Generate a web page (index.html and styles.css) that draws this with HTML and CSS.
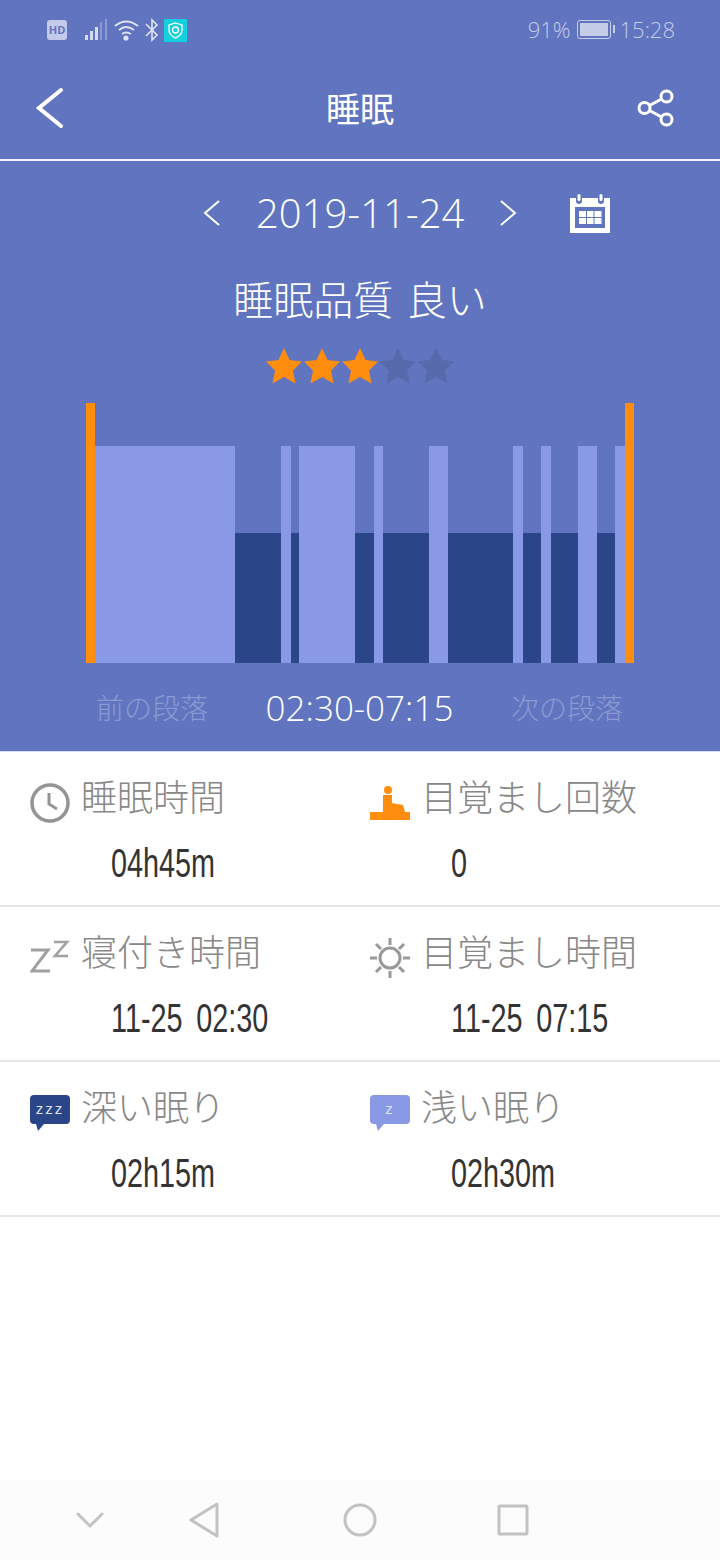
FILE: index.html
```html
<!DOCTYPE html>
<html lang="ja">

<head>
    <meta charset="UTF-8">
    <meta name="viewport" content="width=device-width, initial-scale=1.0">
    <title>睡眠</title>

    <link rel="stylesheet" href="styles.css">
</head>

<body>

    <div class="page">
        <header class="hero">
            <div class="status">
                <div class="status__left">
                    <span class="status__hd">HD</span>
                    <svg class="status__signal" width="23" height="22" viewBox="0 0 23 22">
                        <rect x="0" y="16" width="3" height="5" fill="#d5daef" />
                        <rect x="5" y="12" width="3" height="9" fill="#d5daef" />
                        <rect x="10" y="8" width="3" height="13" fill="#d5daef" />
                        <rect x="15" y="3" width="2" height="18" fill="#8b9ad2" />
                        <rect x="20" y="0" width="2" height="21" fill="#8b9ad2" />
                    </svg>
                    <svg class="status__wifi" width="26" height="22" viewBox="0 0 26 22" fill="none" stroke="#dfe3f3" stroke-width="2">
                        <path d="M1 7 Q12 -2 24 7" />
                        <path d="M5 11 Q12 5 20 11" />
                        <path d="M8 15 Q12 12 17 15" />
                        <circle cx="12" cy="19" r="1.6" fill="#dfe3f3" />
                    </svg>
                    <svg class="status__bt" width="14" height="24" viewBox="0 0 14 24" fill="none" stroke="#dfe3f3" stroke-width="1.6">
                        <path d="M1 6 L12 17 L7 22 V2 L12 7 L1 18" />
                    </svg>
                    <span class="status__shield">
                        <svg width="15" height="17" viewBox="0 0 15 17" fill="none" stroke="#fff" stroke-width="1.3">
                            <path d="M7.5 1 L14 3 V8 Q14 13 7.5 16 Q1 13 1 8 V3 Z" />
                            <circle cx="7.5" cy="8" r="3" />
                        </svg>
                    </span>
                </div>
                <div class="status__right">
                    <span>91%</span>
                    <span class="battery"><span class="battery__fill"></span></span>
                    <span>15:28</span>
                </div>
            </div>

            <div class="appbar">
                <svg class="appbar__back" width="28" height="42" viewBox="0 0 28 42" fill="none" stroke="#fff" stroke-width="4" stroke-linecap="round">
                    <path d="M25 3 L3 21 L25 39" />
                </svg>
                <h1 class="appbar__title">睡眠</h1>
                <svg class="appbar__share" width="38" height="38" viewBox="0 0 38 38" fill="none" stroke="#fff" stroke-width="3">
                    <circle cx="7.5" cy="19" r="5.5" />
                    <circle cx="29.5" cy="7.5" r="5.5" />
                    <circle cx="29.5" cy="30.5" r="5.5" />
                    <path d="M12.5 16.5 L24.5 10 M12.5 21.5 L24.5 28" />
                </svg>
            </div>

            <div class="hero__body">
                <div class="date">
                    <svg width="18" height="28" viewBox="0 0 18 28" fill="none" stroke="#fff" stroke-width="2">
                        <path d="M16 2 L2 14 L16 26" />
                    </svg>
                    <span class="date__text">2019-11-24</span>
                    <svg width="18" height="28" viewBox="0 0 18 28" fill="none" stroke="#fff" stroke-width="2">
                        <path d="M2 2 L16 14 L2 26" />
                    </svg>
                    <svg class="date__cal" width="40" height="39" viewBox="0 0 40 39">
                        <path fill="#fff" d="M0 4 H6 V7 Q6 10 9 10 Q12 10 12 7 V4 H28 V7 Q28 10 31 10 Q34 10 34 7 V4 H40 V39 H0 Z" />
                        <rect x="7.5" y="0" width="3" height="7" rx="1.5" fill="#fff" />
                        <rect x="29.5" y="0" width="3" height="7" rx="1.5" fill="#fff" />
                        <rect x="5" y="13" width="30" height="21" fill="#6074bf" />
                        <g fill="#fff">
                            <rect x="9" y="17" width="7" height="6" />
                            <rect x="17" y="17" width="6.5" height="6" />
                            <rect x="24.5" y="17" width="7" height="6" />
                            <rect x="9" y="24" width="7" height="6" />
                            <rect x="17" y="24" width="6.5" height="6" />
                            <rect x="24.5" y="24" width="7" height="6" />
                        </g>
                    </svg>
                </div>

                <div class="quality">睡眠品質 良い</div>

                <div class="stars">
                    <svg class="star star--on" viewBox="0 0 38 38"><path d="M19 1 L24.5 13 L37 14.5 L28 23.5 L30.5 36.5 L19 30 L7.5 36.5 L10 23.5 L1 14.5 L13.5 13 Z" /></svg>
                    <svg class="star star--on" viewBox="0 0 38 38"><path d="M19 1 L24.5 13 L37 14.5 L28 23.5 L30.5 36.5 L19 30 L7.5 36.5 L10 23.5 L1 14.5 L13.5 13 Z" /></svg>
                    <svg class="star star--on" viewBox="0 0 38 38"><path d="M19 1 L24.5 13 L37 14.5 L28 23.5 L30.5 36.5 L19 30 L7.5 36.5 L10 23.5 L1 14.5 L13.5 13 Z" /></svg>
                    <svg class="star" viewBox="0 0 38 38"><path d="M19 1 L24.5 13 L37 14.5 L28 23.5 L30.5 36.5 L19 30 L7.5 36.5 L10 23.5 L1 14.5 L13.5 13 Z" /></svg>
                    <svg class="star" viewBox="0 0 38 38"><path d="M19 1 L24.5 13 L37 14.5 L28 23.5 L30.5 36.5 L19 30 L7.5 36.5 L10 23.5 L1 14.5 L13.5 13 Z" /></svg>
                </div>

                <div class="chart">
                    <div class="chart__mark" style="width: 9px"></div>
                    <div class="chart__seg chart__seg--light" style="width: 140px"></div>
                    <div class="chart__seg chart__seg--deep" style="width: 46px"></div>
                    <div class="chart__seg chart__seg--light" style="width: 10px"></div>
                    <div class="chart__seg chart__seg--deep" style="width: 8px"></div>
                    <div class="chart__seg chart__seg--light" style="width: 56px"></div>
                    <div class="chart__seg chart__seg--deep" style="width: 19px"></div>
                    <div class="chart__seg chart__seg--light" style="width: 9px"></div>
                    <div class="chart__seg chart__seg--deep" style="width: 46px"></div>
                    <div class="chart__seg chart__seg--light" style="width: 19px"></div>
                    <div class="chart__seg chart__seg--deep" style="width: 65px"></div>
                    <div class="chart__seg chart__seg--light" style="width: 10px"></div>
                    <div class="chart__seg chart__seg--deep" style="width: 18px"></div>
                    <div class="chart__seg chart__seg--light" style="width: 10px"></div>
                    <div class="chart__seg chart__seg--deep" style="width: 27px"></div>
                    <div class="chart__seg chart__seg--light" style="width: 19px"></div>
                    <div class="chart__seg chart__seg--deep" style="width: 18px"></div>
                    <div class="chart__seg chart__seg--light" style="width: 10px"></div>
                    <div class="chart__mark" style="width: 9px"></div>
                </div>

                <div class="range">
                    <span class="range__link">前の段落</span>
                    <span class="range__time">02:30-07:15</span>
                    <span class="range__link">次の段落</span>
                </div>
            </div>
        </header>

        <main class="stats">
            <section class="stats__row">
                <div class="stat">
                    <div class="stat__label">
                        <svg class="stat__icon" width="40" height="40" viewBox="0 0 40 40" fill="none" stroke="#949494" stroke-width="3.5">
                            <circle cx="20" cy="20" r="18" />
                            <path d="M19 10 V21 L27 26" stroke-width="3" />
                        </svg>
                        <span>睡眠時間</span>
                    </div>
                    <div class="stat__value"><span class="stat__digits">04h45m</span></div>
                </div>
                <div class="stat">
                    <div class="stat__label">
                        <svg class="stat__icon" width="40" height="40" viewBox="0 0 40 40" fill="#ff8e0e">
                            <circle cx="18" cy="7" r="4" />
                            <path d="M13 12 H22 V20 L33 22 L35 29 H13 Z" />
                            <rect x="0" y="29" width="40" height="8" rx="1" />
                        </svg>
                        <span>目覚まし回数</span>
                    </div>
                    <div class="stat__value"><span class="stat__digits">0</span></div>
                </div>
            </section>

            <section class="stats__row">
                <div class="stat">
                    <div class="stat__label">
                        <svg class="stat__icon" width="40" height="40" viewBox="0 0 40 40" fill="none" stroke="#a0a0a0" stroke-width="3">
                            <path d="M1 12 H18 L2 33 H20" />
                            <path d="M24 4 H37 L25 18 H38" stroke-width="2.6" />
                        </svg>
                        <span>寝付き時間</span>
                    </div>
                    <div class="stat__value"><span class="stat__digits">11-25 02:30</span></div>
                </div>
                <div class="stat">
                    <div class="stat__label">
                        <svg class="stat__icon" width="40" height="40" viewBox="0 0 40 40" fill="none" stroke="#999" stroke-width="3">
                            <circle cx="20" cy="20" r="10" />
                            <path d="M20 0 V7 M20 33 V40 M0 20 H7 M33 20 H40 M6 6 L11 11 M29 29 L34 34 M34 6 L29 11 M11 29 L6 34" />
                        </svg>
                        <span>目覚まし時間</span>
                    </div>
                    <div class="stat__value"><span class="stat__digits">11-25 07:15</span></div>
                </div>
            </section>

            <section class="stats__row">
                <div class="stat">
                    <div class="stat__label">
                        <span class="bubble bubble--deep">zzz</span>
                        <span>深い眠り</span>
                    </div>
                    <div class="stat__value"><span class="stat__digits">02h15m</span></div>
                </div>
                <div class="stat">
                    <div class="stat__label">
                        <span class="bubble bubble--light">z</span>
                        <span>浅い眠り</span>
                    </div>
                    <div class="stat__value"><span class="stat__digits">02h30m</span></div>
                </div>
            </section>
        </main>

        <nav class="navbar">
            <svg width="28" height="18" viewBox="0 0 28 18" fill="none" stroke="#c2c2c2" stroke-width="3" stroke-linecap="round">
                <path d="M2 3 L14 15 L26 3" />
            </svg>
            <svg class="navbar__back" width="30" height="36" viewBox="0 0 30 36" fill="none" stroke="#c2c2c2" stroke-width="3" stroke-linejoin="round">
                <path d="M28 2 V34 L2 18 Z" />
            </svg>
            <svg class="navbar__home" width="34" height="34" viewBox="0 0 34 34" fill="none" stroke="#c2c2c2" stroke-width="3">
                <circle cx="17" cy="17" r="15" />
            </svg>
            <svg class="navbar__recent" width="32" height="32" viewBox="0 0 32 32" fill="none" stroke="#c2c2c2" stroke-width="3" stroke-linejoin="round">
                <rect x="2" y="2" width="28" height="28" rx="1" />
            </svg>
        </nav>
    </div>

</body>

</html>
```

FILE: styles.css
```css
* {
    box-sizing: border-box;
}

body {
    margin: 0;
    background: #fff;
    font-family: "Open Sans", "Noto Sans CJK JP", sans-serif;
}

.page {
    display: flex;
    flex-direction: column;
    width: 720px;
    height: 1560px;
    overflow: hidden;
}

.hero {
    height: 752px;
    background: #6074bf;
    border-bottom: 1px solid #d9dcec;
    color: #fff;
}

.status {
    display: flex;
    justify-content: space-between;
    align-items: center;
    height: 60px;
    padding: 0 45px 0 47px;
}

.status__left {
    display: flex;
    align-items: center;
}

.status__hd {
    width: 20px;
    height: 20px;
    border-radius: 3px;
    background: #c3cbe8;
    color: #6074bf;
    font-size: 11px;
    font-weight: 700;
    line-height: 20px;
    text-align: center;
}

.status__signal {
    margin-left: 18px;
}

.status__wifi {
    margin-left: 6px;
}

.status__bt {
    margin-left: 5px;
}

.status__shield {
    display: flex;
    align-items: center;
    justify-content: center;
    width: 23px;
    height: 23px;
    margin-left: 5px;
    background: #14cfdc;
}

.status__right {
    display: flex;
    align-items: center;
    gap: 6px;
    margin-top: -2px;
    color: #c5cce8;
    font-size: 22px;
    font-weight: 300;
}

.battery {
    position: relative;
    width: 34px;
    height: 19px;
    margin-right: 3px;
    padding: 2px;
    border: 1.5px solid #c5cce8;
    border-radius: 3px;
}

.battery::after {
    content: "";
    position: absolute;
    top: 4px;
    right: -5px;
    width: 2px;
    height: 8px;
    background: #c5cce8;
}

.battery__fill {
    display: block;
    height: 100%;
    background: #c5cce8;
}

.appbar {
    display: grid;
    grid-template-columns: 1fr auto 1fr;
    align-items: center;
    height: 101px;
    padding: 0 45px 4px;
    border-bottom: 2px solid #f4f5fb;
}

.appbar__back {
    margin-left: -9px;
}

.appbar__title {
    margin: 0;
    font-size: 34px;
    font-weight: 400;
}

.appbar__share {
    justify-self: end;
}

.date {
    display: flex;
    align-items: center;
    height: 104px;
    padding-left: 203px;
}

.date__text {
    width: 207px;
    margin: 0 36px 0 35px;
    font-size: 40px;
    font-weight: 300;
    line-height: 1;
    text-align: center;
    white-space: nowrap;
}

.date__cal {
    margin-left: 53px;
}

.quality {
    height: 70px;
    font-size: 40px;
    font-weight: 300;
    line-height: 70px;
    text-align: center;
    word-spacing: 3px;
}

.stars {
    display: flex;
    justify-content: center;
    height: 40px;
    margin-top: 12px;
}

.star {
    width: 38px;
    height: 38px;
    fill: #5669ab;
}

.star--on {
    fill: #ff8e0e;
}

.chart {
    display: flex;
    align-items: flex-end;
    height: 260px;
    margin: 16px 86px 0;
}

.chart__mark {
    height: 100%;
    background: #ff8e0e;
}

.chart__seg--light {
    height: 217px;
    background: #8999e6;
}

.chart__seg--deep {
    height: 130px;
    background: #2b4589;
}

.range {
    display: flex;
    justify-content: space-between;
    align-items: center;
    height: 88px;
    padding: 0 97px 0 96px;
}

.range__link {
    color: #8b9ad2;
    font-size: 28px;
    font-weight: 300;
}

.range__time {
    font-size: 35px;
    font-weight: 300;
}

.stats {
    flex: 1;
}

.stats__row {
    display: grid;
    grid-template-columns: 340px 340px;
    height: 155px;
    padding: 26px 0 0 30px;
    border-bottom: 2px solid #e6e6e6;
}

.stat__label {
    display: flex;
    align-items: flex-start;
    gap: 11px;
    height: 40px;
    color: #888;
    font-size: 36px;
    font-weight: 300;
    line-height: 40px;
    white-space: nowrap;
}

.stat__icon {
    flex: none;
    margin-top: 5px;
}

.stat__value {
    height: 48px;
    margin-top: 21px;
    padding-left: 81px;
    line-height: 48px;
}

/* no condensed face installed, so squeeze the regular one */
.stat__digits {
    display: inline-block;
    color: #333;
    font-family: "Liberation Sans", sans-serif;
    font-size: 40px;
    white-space: nowrap;
    word-spacing: 8px;
    transform: scaleX(0.72);
    transform-origin: left center;
}

.bubble {
    position: relative;
    flex: none;
    width: 40px;
    height: 29px;
    margin-top: 7px;
    border-radius: 4px;
    color: #dfe3f3;
    font-family: "Liberation Sans", sans-serif;
    font-size: 15px;
    letter-spacing: 2px;
    line-height: 27px;
    text-align: center;
}

.bubble::after {
    content: "";
    position: absolute;
    top: 29px;
    left: 6px;
    border-top: 7px solid transparent;
    border-right: 6px solid transparent;
    border-left: 2px solid transparent;
}

.bubble--deep {
    background: #2b4589;
}

.bubble--deep::after {
    border-top-color: #2b4589;
}

.bubble--light {
    background: #8999e6;
}

.bubble--light::after {
    border-top-color: #8999e6;
}

.navbar {
    display: flex;
    align-items: center;
    height: 80px;
    padding-left: 76px;
    background: #fcfcfc;
}

.navbar__back {
    margin-left: 85px;
}

.navbar__home {
    margin-left: 124px;
}

.navbar__recent {
    margin-left: 120px;
}
```
